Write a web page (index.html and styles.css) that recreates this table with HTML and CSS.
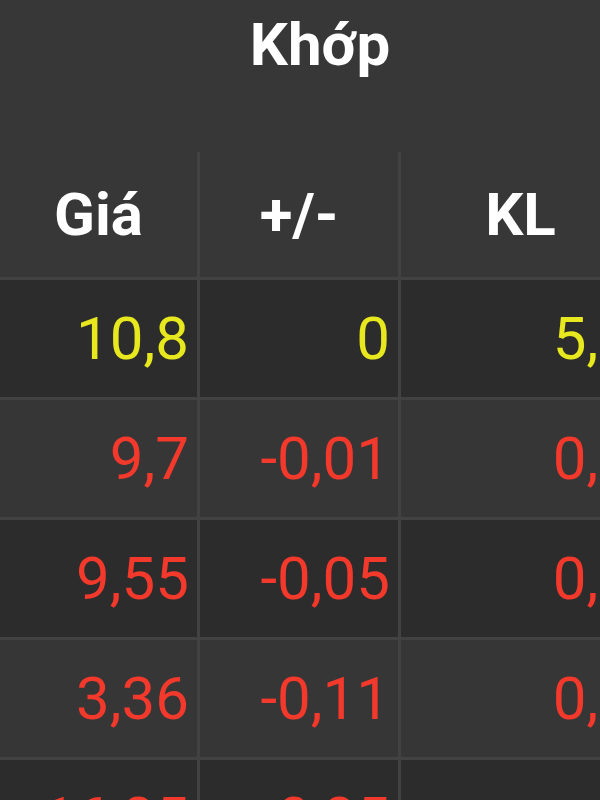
FILE: index.html
```html
<!DOCTYPE html>
<html lang="vi">
<head>
    <meta charset="UTF-8">
    <meta name="viewport" content="width=device-width, initial-scale=1.0">
    <title>Khớp lệnh</title>
    <link rel="stylesheet" href="styles.css">
</head>
<body>
    <table class="board">
        <colgroup>
            <col class="col-price">
            <col class="col-change">
            <col class="col-volume">
        </colgroup>
        <thead>
            <tr class="group-row">
                <th colspan="3">Khớp</th>
            </tr>
            <tr class="title-row">
                <th>Giá</th>
                <th>+/-</th>
                <th>KL</th>
            </tr>
        </thead>
        <tbody>
            <tr>
                <td class="ref">10,8</td>
                <td class="ref">0</td>
                <td class="ref">5,3</td>
            </tr>
            <tr>
                <td class="down">9,7</td>
                <td class="down">-0,01</td>
                <td class="down">0,1</td>
            </tr>
            <tr>
                <td class="down">9,55</td>
                <td class="down">-0,05</td>
                <td class="down">0,2</td>
            </tr>
            <tr>
                <td class="down">3,36</td>
                <td class="down">-0,11</td>
                <td class="down">0,1</td>
            </tr>
            <tr>
                <td class="down">16,85</td>
                <td class="down">-0,85</td>
                <td class="down"></td>
            </tr>
        </tbody>
    </table>
</body>
</html>
```

FILE: styles.css
```css
* {
    margin: 0;
    padding: 0;
    box-sizing: border-box;
}
html, body {
    height: 100%;
}
body {
    background: #2c2c2c;
    font-family: Roboto, "Noto Sans", sans-serif;
    overflow: hidden;
}

.board {
    width: 640px;
    table-layout: fixed;
    border-collapse: separate;
    border-spacing: 0;
}
.col-price { width: 200px; }
.col-change { width: 201px; }
.col-volume { width: 239px; }

/* header */
.board th {
    background: #373737;
    color: #fff;
    font-size: 60px;
    font-weight: 700;
    text-align: center;
}
.group-row th {
    height: 152px;
    line-height: 70px;
    padding-top: 10px;
    vertical-align: top;
}
.title-row th {
    height: 128px;
    vertical-align: middle;
    border-bottom: 3px solid #424242;
}
.title-row th:not(:last-child) {
    border-right: 3px solid #424242;
}

/* rows */
.board td {
    height: 120px;
    padding-right: 8px;
    font-size: 60px;
    text-align: right;
    vertical-align: middle;
    border-bottom: 3px solid #424242;
    white-space: nowrap;
}
.board td:not(:last-child) {
    border-right: 3px solid #424242;
}
.board tbody tr:nth-child(odd) td {
    background: #2c2c2c;
}
.board tbody tr:nth-child(even) td {
    background: #363636;
}

.ref { color: #e8e81e; }
.down { color: #f2392c; }
```
